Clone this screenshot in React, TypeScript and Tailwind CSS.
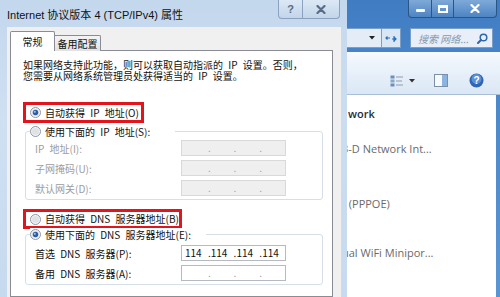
import React from 'react';

const CJK = "'Noto Sans CJK SC', 'Noto Sans', sans-serif";
const UI = "'Open Sans', 'Noto Sans', 'Noto Sans CJK SC', sans-serif";

function Radio({ checked }: { checked?: boolean }) {
  return (
    <svg width="11" height="11" viewBox="0 0 11 11" className="shrink-0">
      <circle cx="5.5" cy="5.5" r="5" fill="#f6f6f6" stroke="#8e97a3" strokeWidth="1" />
      <circle cx="5.5" cy="5.5" r="3.6" fill="#dfe2e7" />
      {checked && <circle cx="5.5" cy="5.5" r="2.7" fill="#2b5ca9" />}
      {checked && <circle cx="4.8" cy="4.8" r="1.1" fill="#9dbdea" />}
    </svg>
  );
}

function IpBox({ values, disabled }: { values?: string[]; disabled?: boolean }) {
  const v = values ?? ['', '', '', ''];
  return (
    <div
      className={`w-[105px] h-[16px] border flex items-center pl-[3px] text-[10px] leading-none [word-spacing:0px] ${
        disabled ? 'bg-[#efefef] border-[#d9d9d9] text-[#a3a3a3]' : 'bg-white border-[#b5bac1] text-[#111]'
      }`}
    >
      {v.map((x, i) => (
        <React.Fragment key={i}>
          <span className="w-[24px] text-left">{x}</span>
          {i < 3 && <span className={`w-[3px] text-center ${x === '' && !disabled ? 'text-[#999]' : ''}`}>.</span>}
        </React.Fragment>
      ))}
    </div>
  );
}

function Row({ label, disabled, values }: { label: string; disabled?: boolean; values?: string[] }) {
  return (
    <div className="flex items-center h-[16px] ml-[9px]">
      <div className={`w-[146px] whitespace-nowrap ${disabled ? 'text-[#9c9c9c]' : 'text-[#111]'}`}>{label}</div>
      <IpBox disabled={disabled} values={values} />
    </div>
  );
}

function Dialog() {
  return (
    <div className="relative z-10 w-[347px] h-full shrink-0 flex flex-col bg-[linear-gradient(180deg,#c3d7ed_0%,#cfe0f2_40%,#c6daef_100%)]">
      {/* title bar */}
      <div className="h-[27px] flex items-start">
        <div className="pt-[8px] pl-[7px] text-[11px] leading-[14px] text-[#111]" style={{ fontFamily: "'Liberation Sans', 'Noto Sans CJK SC', sans-serif" }}>
          Internet 协议版本 4 (TCP/IPv4) 属性
        </div>
        <div className="ml-auto mr-[7px] flex h-[19px] rounded-b-[4px] border border-t-0 border-[#8aa2c0] overflow-hidden bg-[linear-gradient(180deg,#dce8f5,#c2d5ea)]">
          <div className="w-[24px] flex items-center justify-center border-r border-[#8aa2c0] text-[11px] font-bold text-[#5a6c85]" style={{ fontFamily: "'Liberation Sans', sans-serif" }}>?</div>
          <div className="w-[36px] flex items-center justify-center">
            <svg width="10" height="9" viewBox="0 0 10 9">
              <path d="M1.5 1 L8.5 8 M8.5 1 L1.5 8" stroke="#5a6c85" strokeWidth="2.2" strokeLinecap="round" />
            </svg>
          </div>
        </div>
      </div>
      {/* client + side frames */}
      <div className="flex-1 flex">
        <div className="w-[7px]" />
        <div className="flex-1 bg-[#f0f0f0] flex flex-col pl-[3px] pr-[8px] pt-[5px]" style={{ fontFamily: CJK }}>
          {/* tabs */}
          <div className="flex items-end h-[19px] relative z-10 -mb-px">
            <div className="w-[45px] h-[20px] bg-white border border-b-0 border-[#898c95] rounded-t-[2px] flex items-center justify-center pb-[1px] text-[10px] text-[#111]">
              常规
            </div>
            <div className="w-[46px] h-[16px] bg-[linear-gradient(180deg,#f4f4f4,#e2e2e2)] border border-l-0 border-b-0 border-[#898c95] rounded-tr-[2px] flex items-center justify-center text-[10px] text-[#111]">
              备用配置
            </div>
          </div>
          {/* panel */}
          <div className="flex-1 bg-white border border-[#898c95] text-[10px] text-[#111] [word-spacing:3px]">
            <div className="mt-[8px] ml-[12px] whitespace-nowrap">
              <div className="h-[11px] leading-[11px]">如果网络支持此功能，则可以获取自动指派的 IP 设置。否则，</div>
              <div className="h-[11px] leading-[11px]">您需要从网络系统管理员处获得适当的 IP 设置。</div>
            </div>
            {/* red box 1 */}
            <div className="mt-[21px] ml-[12px] w-[121px] h-[21px] border-[3px] border-[#e2141c] flex items-center pl-[4px] gap-[4px]">
              <Radio checked />
              <span className="leading-none whitespace-nowrap">自动获得 IP 地址(O)</span>
            </div>
            {/* group 1 */}
            <div className="mt-[8px] ml-[14px] w-[298px] border border-[#d5dfe5] rounded-[3px] pb-[3px]">
              <div className="-mt-[7px] ml-[4px] w-[145px] h-[13px] bg-white flex items-center gap-[4px]">
                <Radio />
                <span className="leading-none whitespace-nowrap">使用下面的 IP 地址(S):</span>
              </div>
              <div className="mt-[2px] flex flex-col gap-[4px]">
                <Row label="IP 地址(I):" disabled />
                <Row label="子网掩码(U):" disabled />
                <Row label="默认网关(D):" disabled />
              </div>
            </div>
            {/* red box 2 */}
            <div className="mt-[9px] ml-[12px] w-[159px] h-[20px] border-[3px] border-[#e2141c] flex items-center pl-[4px] gap-[4px]">
              <Radio />
              <span className="leading-none whitespace-nowrap">自动获得 DNS 服务器地址(B)</span>
            </div>
            {/* group 2 */}
            <div className="mt-[5px] ml-[14px] w-[298px] border border-[#d5dfe5] rounded-[3px] pb-[3px]">
              <div className="-mt-[7px] ml-[4px] w-[176px] h-[13px] bg-white flex items-center gap-[4px]">
                <Radio checked />
                <span className="leading-none whitespace-nowrap">使用下面的 DNS 服务器地址(E):</span>
              </div>
              <div className="mt-[4px] flex flex-col gap-[4px]">
                <Row label="首选 DNS 服务器(P):" values={['114', '114', '114', '114']} />
                <Row label="备用 DNS 服务器(A):" />
              </div>
            </div>
          </div>
        </div>
        <div className="w-[6px] bg-[#c8dbef]/60" />
      </div>
    </div>
  );
}

function Explorer() {
  return (
    <div className="flex-1 -ml-[6px] h-full flex flex-col bg-[linear-gradient(180deg,#3f7cc2_0%,#4b88cb_30%,#5a95d3_100%)] overflow-hidden" style={{ fontFamily: UI }}>
      {/* title */}
      <div className="h-[24px] flex items-start">
        <div className="ml-auto mr-[3px] flex h-[18px] rounded-b-[4px] border border-t-0 border-[#2a5587] overflow-hidden bg-[linear-gradient(180deg,#7fa9d8,#4e84c3)]">
          <div className="w-[23px] flex items-center justify-center border-r border-[#2a5587]">
            <div className="w-[9px] h-[3px] bg-white rounded-[1px] mt-[4px]" />
          </div>
          <div className="w-[22px] flex items-center justify-center border-r border-[#2a5587]">
            <div className="w-[10px] h-[8px] border-2 border-t-[3px] border-white" />
          </div>
          <div className="w-[42px] flex items-center justify-center">
            <svg width="10" height="9" viewBox="0 0 10 9">
              <path d="M1.5 1 L8.5 8 M8.5 1 L1.5 8" stroke="#ffffff" strokeWidth="2.2" strokeLinecap="round" />
            </svg>
          </div>
        </div>
      </div>
      {/* address row */}
      <div className="h-[28px] flex items-start pt-[4px]">
        <div className="w-[41px] h-[20px] bg-[#e4edf7] border border-l-0 border-[#7b9ec9] flex items-center justify-end pr-[6px]">
          <svg width="6" height="4" viewBox="0 0 6 4"><path d="M0 0 H6 L3 3.5 Z" fill="#222" /></svg>
        </div>
        <div className="w-[19px] h-[20px] bg-[#d9e6f4] border border-l-0 border-[#7b9ec9] flex items-center justify-center">
          <svg width="12" height="9" viewBox="0 0 12 9">
            <path d="M1 4 L5 4 M2.5 2.5 L1 4 L2.5 5.5" stroke="#2a6fbd" strokeWidth="1.2" fill="none" />
            <path d="M11 5 L7 5 M9.5 3.5 L11 5 L9.5 6.5 M9 2 V8" stroke="#2a6fbd" strokeWidth="1.2" fill="none" />
          </svg>
        </div>
        <div className="ml-[9px] w-[83px] h-[20px] bg-[#e8eff8] border border-[#7b9ec9] flex items-center pl-[7px] pr-[4px]">
          <span className="text-[10px] italic text-[#8899ad]" style={{ fontFamily: CJK }}>搜索 网络...</span>
          <svg className="ml-auto" width="11" height="11" viewBox="0 0 11 11">
            <circle cx="6.5" cy="4.5" r="3.3" stroke="#2c67b0" strokeWidth="1.5" fill="none" />
            <path d="M4 7 L1 10" stroke="#2c67b0" strokeWidth="2" strokeLinecap="round" />
          </svg>
        </div>
      </div>
      {/* toolbar */}
      <div className="h-[43px] ml-[6px] bg-[linear-gradient(180deg,#f6f9fd_0%,#e9f1fa_45%,#dae7f4_100%)] border-b border-[#a9bfd8] flex items-end pb-[6px]">
        <div className="ml-[43px] flex items-center">
          <svg width="14" height="12" viewBox="0 0 14 12">
            <rect x="0.5" y="0.5" width="4" height="3" fill="#6d8fb7" />
            <rect x="0.5" y="4.5" width="4" height="3" fill="#8aa7c8" />
            <rect x="0.5" y="8.5" width="4" height="3" fill="#6d8fb7" />
            <path d="M6 2 H13 M6 6 H12 M6 10 H13" stroke="#8a9bb0" strokeWidth="1" />
          </svg>
          <svg className="ml-[5px]" width="6" height="4" viewBox="0 0 6 4"><path d="M0 0 H6 L3 3.5 Z" fill="#333" /></svg>
          <svg className="ml-[19px]" width="14" height="13" viewBox="0 0 14 13">
            <rect x="0.5" y="0.5" width="13" height="12" fill="#f7fafd" stroke="#7d8fa6" />
            <rect x="8" y="1" width="5" height="11" fill="#8bb4e0" />
          </svg>
          <svg className="ml-[21px]" width="15" height="15" viewBox="0 0 15 15">
            <circle cx="7.5" cy="7.5" r="7" fill="#2f64b6" />
            <circle cx="7.5" cy="6" r="5" fill="#5d8fd6" />
            <text x="7.5" y="11.3" textAnchor="middle" fontSize="10" fontWeight="bold" fill="#fff" fontFamily="Liberation Sans">?</text>
          </svg>
        </div>
      </div>
      {/* content */}
      <div className="flex-1 bg-white mr-[4px] text-[11px] leading-none overflow-hidden relative">
        <div className="mt-[13px] ml-[7px] font-semibold text-[#1e2a3a] whitespace-nowrap">work</div>
        <div className="mt-[24px] ml-[1px] text-[#6a6a6a] whitespace-nowrap">3-D Network Int...</div>
        <div className="mt-[44px] ml-[1px] text-[#6a6a6a] whitespace-nowrap">t (PPPOE)</div>
        <div className="mt-[38px] ml-[1px] text-[#6a6a6a] whitespace-nowrap">ual WiFi Minipor...</div>
      </div>
    </div>
  );
}

export default function App() {
  return (
    <div className="w-[500px] h-[297px] overflow-hidden flex bg-[#4b88cb]">
      <Dialog />
      <Explorer />
    </div>
  );
}
